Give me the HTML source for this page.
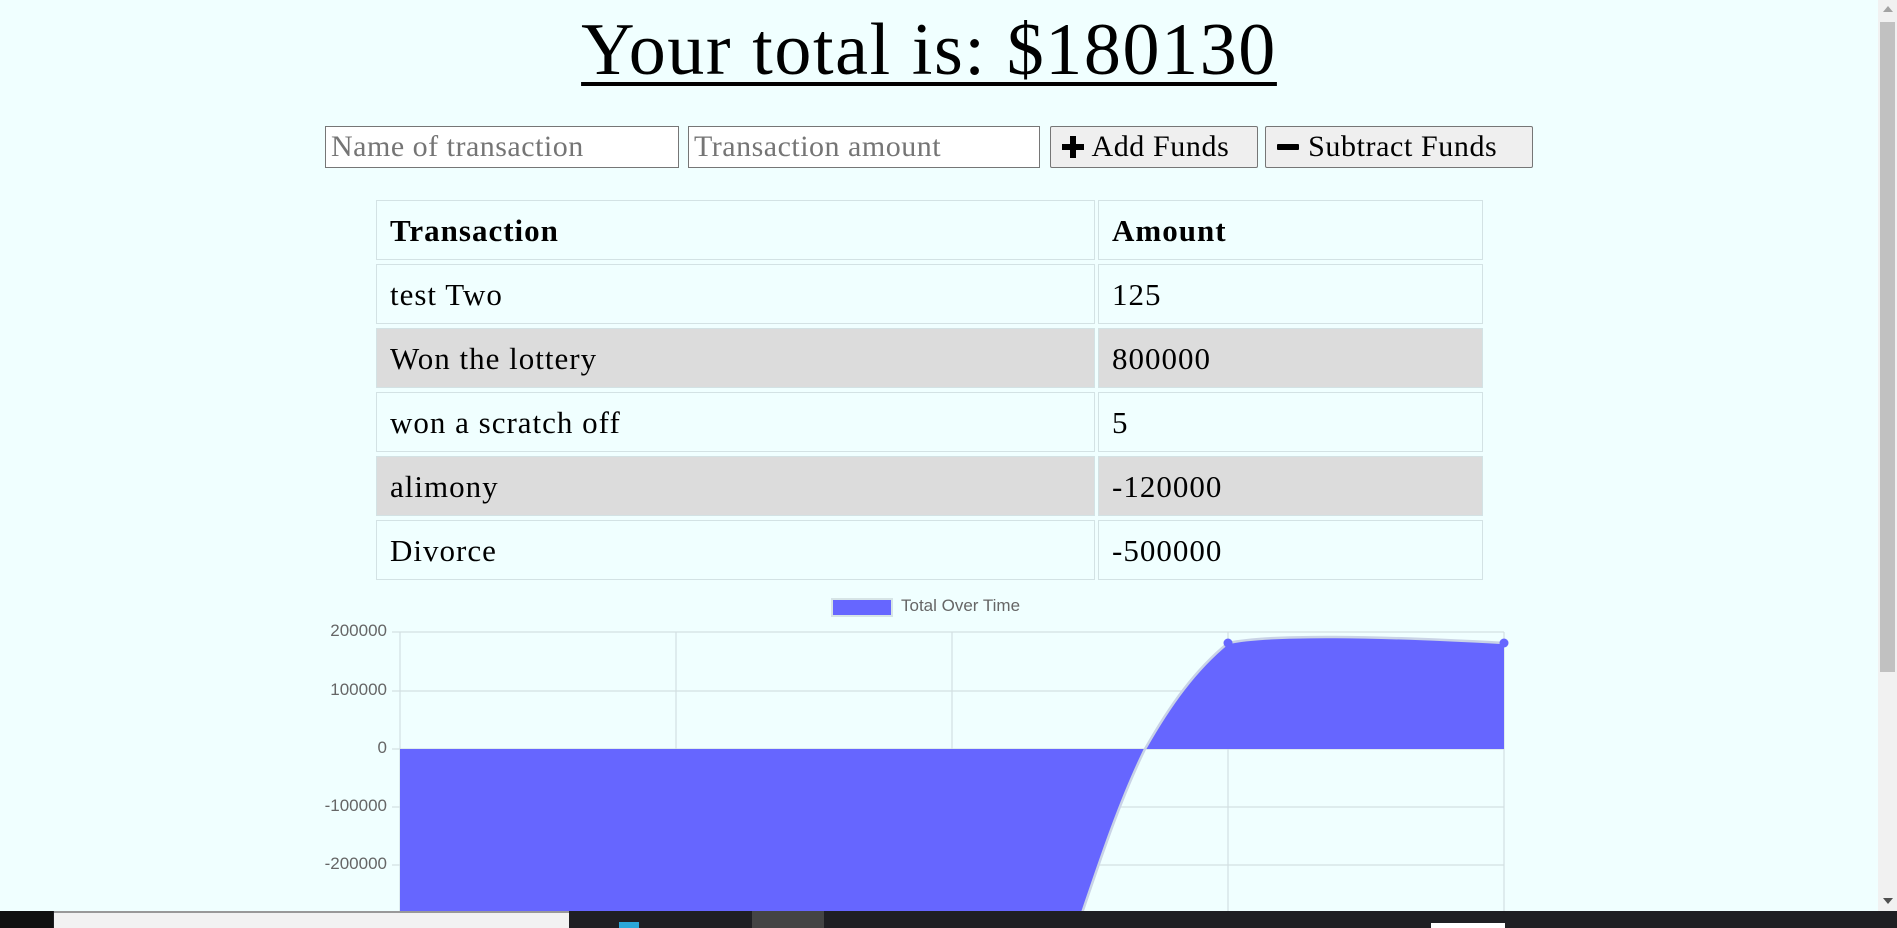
<!DOCTYPE html>
<html><head><meta charset="utf-8"><style>
*{box-sizing:border-box;margin:0;padding:0}
body{width:1897px;height:928px;background:#f0ffff;position:relative;overflow:hidden;font-family:"Liberation Serif",serif;color:#000}
.a{position:absolute}
h1{position:absolute;left:0;width:1858px;top:8px;text-align:center;font-weight:normal;font-size:74px;letter-spacing:1.6px;text-decoration:underline;text-decoration-thickness:4px;text-underline-offset:8px;line-height:84px}
.inp{position:absolute;top:126px;height:42px;border:1px solid #767676;background:#fff;font-size:30px;letter-spacing:0.5px;color:#757575;padding-left:5px;line-height:40px}
.btn{position:absolute;top:126px;height:42px;border:1px solid #767676;border-radius:2px;background:#efefef;font-size:30px;letter-spacing:0.6px;line-height:40px;padding-left:10px;white-space:nowrap}
.cell{position:absolute;border:1px solid #d3e2e4;font-size:31px;letter-spacing:1px;line-height:60px;padding-left:13px}
.g{background:#dcdcdc}
.yl{position:absolute;font-family:"Liberation Sans",sans-serif;font-size:17px;color:#666;text-align:right;width:80px;left:307px}
</style></head><body>
<h1>Your total is: $180130</h1>
<div class="inp" style="left:325px;width:354px">Name of transaction</div>
<div class="inp" style="left:688px;width:352px">Transaction amount</div>
<div class="btn" style="left:1050px;width:208px"><svg width="24" height="24" viewBox="0 0 24 24" style="vertical-align:-3px"><path d="M9 1h6v8h8v6h-8v8H9v-8H1V9h8z" fill="#000"/></svg> Add Funds</div>
<div class="btn" style="left:1265px;width:268px"><svg width="24" height="24" viewBox="0 0 24 24" style="vertical-align:-3px"><rect x="1" y="9" width="22" height="6" rx="1" fill="#000"/></svg> Subtract Funds</div>

<div class="cell" style="left:376px;top:200px;width:719px;height:60px;font-weight:bold">Transaction</div>
<div class="cell" style="left:1098px;top:200px;width:385px;height:60px;font-weight:bold">Amount</div>
<div class="cell" style="left:376px;top:264px;width:719px;height:60px">test Two</div>
<div class="cell" style="left:1098px;top:264px;width:385px;height:60px">125</div>
<div class="cell g" style="left:376px;top:328px;width:719px;height:60px">Won the lottery</div>
<div class="cell g" style="left:1098px;top:328px;width:385px;height:60px">800000</div>
<div class="cell" style="left:376px;top:392px;width:719px;height:60px">won a scratch off</div>
<div class="cell" style="left:1098px;top:392px;width:385px;height:60px">5</div>
<div class="cell g" style="left:376px;top:456px;width:719px;height:60px">alimony</div>
<div class="cell g" style="left:1098px;top:456px;width:385px;height:60px">-120000</div>
<div class="cell" style="left:376px;top:520px;width:719px;height:60px">Divorce</div>
<div class="cell" style="left:1098px;top:520px;width:385px;height:60px">-500000</div>

<div class="a" style="left:831px;top:598px;width:62px;height:19px;background:#6666ff;border:2px solid #d6e4e6"></div>
<div class="a" style="left:901px;top:596px;font-family:'Liberation Sans',sans-serif;font-size:17px;color:#666">Total Over Time</div>
<div class="yl" style="top:621px">200000</div>
<div class="yl" style="top:680px">100000</div>
<div class="yl" style="top:738px">0</div>
<div class="yl" style="top:796px">-100000</div>
<div class="yl" style="top:854px">-200000</div>
<svg class="a" style="left:0;top:0" width="1897" height="928">
<g stroke="#d3e0e2" stroke-width="1.2">
<line x1="392" y1="632" x2="1504" y2="632"/><line x1="392" y1="691" x2="1504" y2="691"/><line x1="392" y1="749" x2="1504" y2="749"/><line x1="392" y1="807" x2="1504" y2="807"/><line x1="392" y1="865" x2="1504" y2="865"/>
<line x1="400" y1="632" x2="400" y2="928"/><line x1="676" y1="632" x2="676" y2="928"/><line x1="952" y1="632" x2="952" y2="928"/><line x1="1228" y1="632" x2="1228" y2="928"/><line x1="1504" y1="632" x2="1504" y2="928"/>
</g>
<path d="M400 749 L400 928 L1077 928 C1100 860 1120 800 1145 749 C1170 705 1195 670 1228 643 C1270 634 1380 636 1504 643 L1504 749 Z" fill="#6666ff"/>
<path d="M1077 928 C1100 860 1120 800 1145 749 C1170 705 1195 670 1228 643 C1270 634 1380 636 1504 643" fill="none" stroke="#c9d3e6" stroke-width="2.5"/>
<circle cx="1228" cy="643" r="4.5" fill="#6666ff"/><circle cx="1504" cy="643" r="4.5" fill="#6666ff"/>
</svg>

<div class="a" style="left:1878px;top:0;width:19px;height:911px;background:#f1f1f1"></div>
<div class="a" style="left:1880px;top:22px;width:15px;height:650px;background:#c1c1c1"></div>
<div class="a" style="left:1883px;top:6px;width:0;height:0;border-left:5px solid transparent;border-right:5px solid transparent;border-bottom:6px solid #a3a3a3"></div>
<div class="a" style="left:1883px;top:898px;width:0;height:0;border-left:5px solid transparent;border-right:5px solid transparent;border-top:6px solid #505050"></div>

<div class="a" style="left:0;top:911px;width:1897px;height:17px;background:#1f1f23"></div>
<div class="a" style="left:0;top:911px;width:53px;height:17px;background:#101010"></div>
<div class="a" style="left:54px;top:911px;width:515px;height:17px;background:#f2f2f2;border-top:2px solid #999"></div>
<div class="a" style="left:619px;top:922px;width:20px;height:6px;background:#2aa7d8"></div>
<div class="a" style="left:752px;top:911px;width:72px;height:17px;background:#444"></div>
<div class="a" style="left:1431px;top:923px;width:74px;height:5px;background:#fff"></div>
</body></html>
